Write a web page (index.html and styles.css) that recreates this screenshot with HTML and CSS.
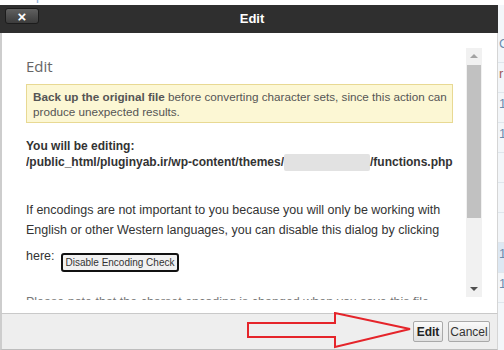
FILE: index.html
```html
<!DOCTYPE html>
<html lang="en">
<head>
    <meta charset="UTF-8">
    <meta name="viewport" content="width=device-width, initial-scale=1.0">
    <title>Edit</title>
    <link rel="stylesheet" href="styles.css">
</head>
<body>
    <div class="toolbar">
        <div class="toolbar-row">
            <span class="tool tool-up">Up One Level</span>
            <span class="tool"><span class="tool-icon">&#8630;</span>Back</span>
            <span class="tool"><span class="tool-icon">&#8631;</span>Forward</span>
            <span class="tool"><span class="tool-icon">&#8635;</span>Reload</span>
            <span class="tool"><span class="tool-icon">&#9745;</span>Select All</span>
        </div>
    </div>

    <div class="screen">
        <div class="dialog">
            <div class="dialog-header">
                <div><button class="close-btn">&times;</button></div>
                <div class="dialog-title">Edit</div>
                <div></div>
            </div>

            <div class="dialog-body">
                <div class="scroll-area">
                    <div class="content">
                        <h2 class="content-title">Edit</h2>
                        <div class="warning">
                            <span class="nowrap"><b>Back up the original file</b> before converting character sets, since this action can</span><br>
                            produce unexpected results.
                        </div>
                        <div class="editing">
                            You will be editing:<br>
                            <span class="nowrap">/public_html/pluginyab.ir/wp-content/themes/<span class="blurred"></span>/functions.php</span>
                        </div>
                        <p class="note">If encodings are not important to you because you will only be working with English or other Western languages, you can disable this dialog by clicking</p>
                        <div class="here-row">
                            <span>here:</span>
                            <button class="disable-btn">Disable Encoding Check</button>
                        </div>
                        <p class="note note-cut">Please note that the charset encoding is changed when you save this file.</p>
                    </div>
                    <div class="scrollbar">
                        <div class="sb-arrow sb-up"></div>
                        <div class="sb-track"><div class="sb-thumb"></div></div>
                        <div class="sb-arrow sb-down"></div>
                    </div>
                </div>
            </div>

            <div class="dialog-footer">
                <svg class="pointer" width="170" height="38" viewBox="0 0 170 38">
                    <polygon points="1,11 88,11 88,1 163,17 88,35 88,25 1,25" fill="none" stroke="#e5242a" stroke-width="2"/>
                </svg>
                <button class="footer-btn footer-btn-main">Edit</button>
                <button class="footer-btn footer-btn-cancel">Cancel</button>
            </div>
        </div>

        <div class="side">
            <div class="side-row">G</div>
            <div class="side-row side-red">r</div>
            <div class="side-row">1</div>
            <div class="side-row">1</div>
            <div class="side-row"></div>
            <div class="side-row"></div>
            <div class="side-row"></div>
            <div class="side-row side-hl">1</div>
            <div class="side-row">1</div>
        </div>
    </div>
</body>
</html>
```

FILE: styles.css
```css
/* Encoding dialog over the file manager */
body {
    margin: 0;
    width: 504px;
    height: 350px;
    overflow: hidden;
    background: #fff;
    font-family: "Liberation Sans", Arial, sans-serif;
}
.toolbar {
    height: 5px;
    overflow: hidden;
}
.toolbar-row {
    display: flex;
    margin-top: -14px;
    padding-left: 25px;
    font-size: 15px;
    line-height: 18px;
    color: #9ab6dc;
}
.tool {
    margin-right: 24px;
}
.tool-up {
    margin-right: 30px;
}
.tool-icon {
    margin-right: 3px;
}
.screen {
    display: flex;
    height: 345px;
}
.dialog {
    width: 498px;
    display: flex;
    flex-direction: column;
}
.dialog-header {
    height: 28px;
    background: #2f2f2f;
    display: grid;
    grid-template-columns: 1fr auto 1fr;
}
.close-btn {
    margin: 3px 0 0 5px;
    width: 34px;
    height: 16px;
    padding: 0;
    border: 1px solid #1c1c1c;
    border-radius: 3px;
    background: linear-gradient(#606060, #3c3c3c);
    color: #fff;
    font: bold 15px/13px "Liberation Sans", Arial, sans-serif;
}
.dialog-title {
    color: #fff;
    font-weight: bold;
    font-size: 13px;
    line-height: 28px;
    padding-left: 6px;
}
.dialog-body {
    height: 280px;
    background: #fff;
    border-left: 2px solid #cdcdcd;
    border-right: 1px solid #d5d5d5;
}
.scroll-area {
    display: flex;
    margin-top: 14px;
    height: 253px;
}
.content {
    width: 427px;
    margin: 0 13px 0 24px;
    padding-top: 9px;
    overflow: hidden;
    font-size: 12.5px;
    color: #333;
}
.content-title {
    margin: 0 0 8px;
    font: 15px/20px "Open Sans", "Liberation Sans", sans-serif;
    color: #666;
}
.nowrap {
    white-space: nowrap;
}
.warning {
    border: 1px solid #e8d993;
    background: #fcf7d4;
    padding: 4px 2px 3px 6px;
    font-size: 11.7px;
    line-height: 15px;
    color: #555;
    overflow: hidden;
}
.editing {
    margin-top: 16px;
    font-size: 12px;
    line-height: 15px;
    font-weight: bold;
}
.blurred {
    display: inline-block;
    width: 86px;
    height: 17px;
    vertical-align: -5px;
    background: #e2e2e2;
    border-radius: 2px;
}
.note {
    margin: 29px 0 0;
    line-height: 20px;
}
.here-row {
    display: flex;
    align-items: flex-start;
    gap: 6px;
    margin-top: 6px;
    line-height: 20px;
}
.disable-btn {
    margin-top: 7px;
    height: 19px;
    padding: 0 3px;
    border: 2px solid #111;
    border-radius: 3px;
    background: #f1f1f1;
    color: #333;
    font: 10px/14px "Liberation Sans", Arial, sans-serif;
}
.note-cut {
    margin-top: 20px;
    color: #777;
}
.scrollbar {
    width: 16px;
    height: 249px;
    margin-top: 1px;
    display: flex;
    flex-direction: column;
    background: #f1f1f1;
}
.sb-arrow {
    height: 16px;
    display: flex;
    align-items: center;
    justify-content: center;
}
.sb-up::before {
    content: "";
    border: 4px solid transparent;
    border-top: 0;
    border-bottom: 4px solid #a3a3a3;
}
.sb-down::before {
    content: "";
    border: 4px solid transparent;
    border-bottom: 0;
    border-top: 4px solid #505050;
}
.sb-track {
    flex: 1;
    padding: 1px 1px 0;
}
.sb-thumb {
    height: 153px;
    background: #c1c1c1;
}
.dialog-footer {
    position: relative;
    height: 37px;
    box-sizing: border-box;
    background: #eee;
    border-top: 1px solid #c9c9c9;
    border-bottom: 1px solid #bdbdbd;
    border-left: 2px solid #cdcdcd;
    border-right: 1px solid #d5d5d5;
    display: flex;
    justify-content: flex-end;
    align-items: flex-start;
    gap: 5px;
    padding: 7px 7px 0 0;
}
.pointer {
    position: absolute;
    left: 245px;
    top: -2px;
}
.footer-btn {
    height: 21px;
    padding: 0;
    border: 1px solid #a9a9a9;
    border-radius: 2px;
    background: linear-gradient(#fafafa, #e0e0e0);
    color: #333;
    font: 12px "Liberation Sans", Arial, sans-serif;
}
.footer-btn-main {
    width: 30px;
    font-weight: bold;
    color: #222;
}
.footer-btn-cancel {
    width: 42px;
}
.side {
    flex: 1;
    background: #f3f6f9;
    overflow: hidden;
    padding-top: 28px;
    font-size: 13px;
    color: #6c8cae;
}
.side-row {
    height: 29px;
    line-height: 22px;
    border-bottom: 1px solid #dfe6ec;
    padding-left: 1px;
}
.side-red {
    color: #a05a5a;
}
.side-hl {
    background: #dde8f3;
}
```
